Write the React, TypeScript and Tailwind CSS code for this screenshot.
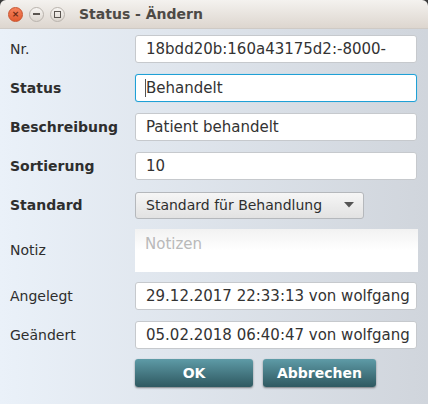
import React from "react";

const font = { fontFamily: '"DejaVu Sans", "Liberation Sans", sans-serif' };

function Field({ value, focused }: { value: string; focused?: boolean }) {
  return (
    <div
      className={
        "h-[28px] w-[282px] rounded-[3px] bg-white flex items-center pl-[10px] text-[15px] text-[#333] whitespace-nowrap overflow-hidden " +
        (focused
          ? "border-[1.5px] border-[#1fa0d6] shadow-[0_0_1px_#7cc8ea]"
          : "border border-[#c6c9cd]")
      }
    >
      {focused && <span className="w-px h-[18px] bg-[#555] -ml-[1px] mr-0" />}
      {value}
    </div>
  );
}

function Row({
  label,
  bold,
  children,
  h,
}: {
  label: string;
  bold?: boolean;
  children: React.ReactNode;
  h?: string;
}) {
  return (
    <div className={"flex items-center " + (h ?? "")}>
      <div
        className={
          "w-[135px] shrink-0 pl-[10px] text-[14px] text-[#2e2e2e] " +
          (bold ? "font-bold" : "")
        }
      >
        {label}
      </div>
      {children}
    </div>
  );
}

export default function App() {
  return (
    <div style={font} className="w-[428px] h-[404px] bg-[#3a3a3a] overflow-hidden">
      <div className="w-[428px] h-[404px] rounded-t-[6px] overflow-hidden flex flex-col">
        <div className="h-[29px] bg-gradient-to-b from-[#f4f2ef] to-[#ddd6cf] border-b border-[#cfcac5] flex items-center pl-[8px] shrink-0">
          <div className="w-[15px] h-[15px] rounded-full bg-gradient-to-b from-[#f5825c] to-[#e25a2e] border border-[#c8532e] flex items-center justify-center text-[9px] text-[#6a2a14] font-bold leading-none">
            ×
          </div>
          <div className="ml-[6px] w-[15px] h-[15px] rounded-full bg-gradient-to-b from-[#f8f6f3] to-[#dcd6cf] border border-[#b9b3ad] flex items-center justify-center">
            <div className="w-[7px] h-[1.5px] bg-[#5a5550]" />
          </div>
          <div className="ml-[6px] w-[15px] h-[15px] rounded-full bg-gradient-to-b from-[#f8f6f3] to-[#dcd6cf] border border-[#b9b3ad] flex items-center justify-center">
            <div className="w-[7px] h-[7px] border border-[#5a5550]" />
          </div>
          <div className="ml-[14px] text-[14px] font-bold text-[#4d4a46]">
            Status - Ändern
          </div>
        </div>
        <div className="flex-1 bg-gradient-to-r from-[#eaf1f9] to-[#d0d5dc] flex flex-col pt-[6px]">
          <Row label="Nr." h="h-[28px] mt-[0px]">
            <Field value="18bdd20b:160a43175d2:-8000-" />
          </Row>
          <Row label="Status" bold h="h-[28px] mt-[11px]">
            <Field value="Behandelt" focused />
          </Row>
          <Row label="Beschreibung" bold h="h-[28px] mt-[11px]">
            <Field value="Patient behandelt" />
          </Row>
          <Row label="Sortierung" bold h="h-[28px] mt-[11px]">
            <Field value="10" />
          </Row>
          <Row label="Standard" bold h="h-[28px] mt-[11px]">
            <div className="h-[27px] w-[229px] rounded-[3px] border border-[#b5b8bc] bg-gradient-to-b from-[#f6f6f6] to-[#e2e2e2] flex items-center pl-[10px] pr-[9px] text-[14px] text-[#2e2e2e]">
              <span className="flex-1">Standard für Behandlung</span>
              <svg width="10" height="6" viewBox="0 0 10 6">
                <path d="M0 0 L10 0 L5 5.5 Z" fill="#555" />
              </svg>
            </div>
          </Row>
          <Row label="Notiz" h="h-[43px] mt-[10px]">
            <div className="h-[43px] w-[283px] bg-gradient-to-b from-[#f2f2f2] via-white to-white bg-white flex items-start pl-[10px] pt-[4px] text-[15px] text-[#b9b9b9]">
              Notizen
            </div>
          </Row>
          <Row label="Angelegt" h="h-[28px] mt-[10px]">
            <Field value="29.12.2017 22:33:13 von wolfgang" />
          </Row>
          <Row label="Geändert" h="h-[28px] mt-[11px]">
            <Field value="05.02.2018 06:40:47 von wolfgang" />
          </Row>
          <div className="flex mt-[10px] pl-[135px] gap-[10px]">
            <div className="w-[118px] h-[28px] rounded-[3px] bg-gradient-to-b from-[#5e9ba7] to-[#2f5961] shadow-[0_1px_2px_rgba(0,0,0,0.45)] flex items-center justify-center text-[14px] font-bold text-white">
              OK
            </div>
            <div className="w-[113px] h-[28px] rounded-[3px] bg-gradient-to-b from-[#5e9ba7] to-[#2f5961] shadow-[0_1px_2px_rgba(0,0,0,0.45)] flex items-center justify-center text-[14px] font-bold text-white">
              Abbrechen
            </div>
          </div>
        </div>
      </div>
    </div>
  );
}
